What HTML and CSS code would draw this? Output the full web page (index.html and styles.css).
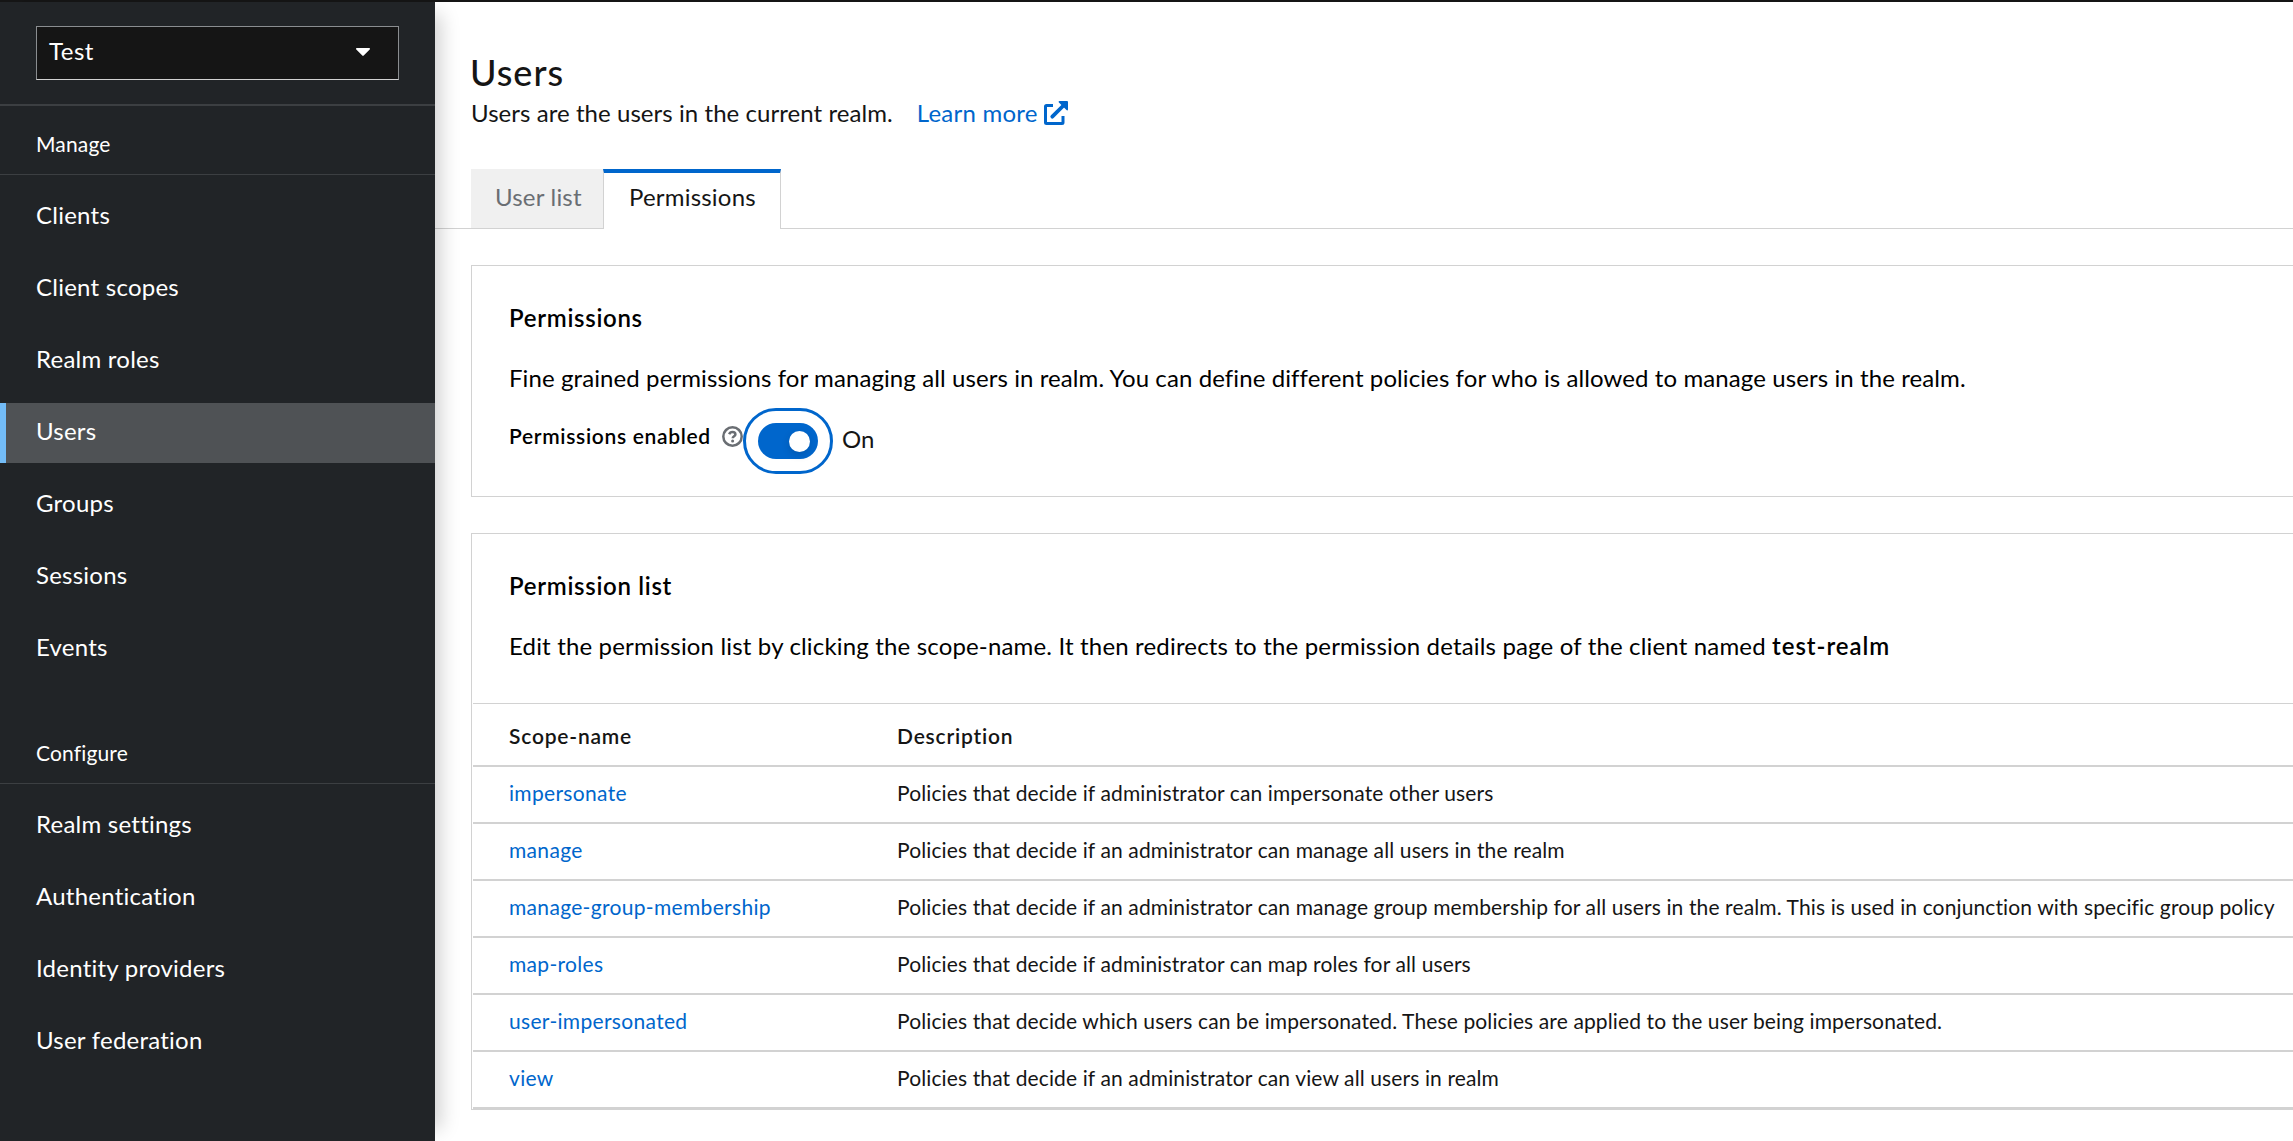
FILE: index.html
```html
<!DOCTYPE html>
<html lang="en">
<head>
<meta charset="utf-8">
<title>Users</title>
<link rel="stylesheet" href="styles.css">
</head>
<body>
<header class="masthead"></header>
<div class="page">
  <aside class="sidebar">
    <div class="realm">
      <button class="realm-select"><span>Test</span><svg class="caret" viewBox="0 0 14 8"><path d="M1 0h12c.9 0 1.300 1 .7 1.600L7.700 7.600a1 1 0 0 1-1.400 0L.3 1.600C-.3 1 .1 0 1 0z"/></svg></button>
    </div>
    <nav>
      <section class="nav-section">
        <h2 class="nav-title">Manage</h2>
        <ul class="nav-list">
          <li class="nav-item">Clients</li>
          <li class="nav-item">Client scopes</li>
          <li class="nav-item">Realm roles</li>
          <li class="nav-item current">Users</li>
          <li class="nav-item">Groups</li>
          <li class="nav-item">Sessions</li>
          <li class="nav-item">Events</li>
        </ul>
      </section>
      <section class="nav-section">
        <h2 class="nav-title">Configure</h2>
        <ul class="nav-list">
          <li class="nav-item">Realm settings</li>
          <li class="nav-item">Authentication</li>
          <li class="nav-item">Identity providers</li>
          <li class="nav-item">User federation</li>
        </ul>
      </section>
    </nav>
  </aside>
  <main class="main">
    <h1 class="title">Users</h1>
    <div class="subtitle">
      <span>Users are the users in the current realm.</span>
      <a class="learn">Learn more <svg class="external" viewBox="0 0 24 24"><path d="M9 4.500H2.500a1 1 0 0 0-1 1V21.500a1 1 0 0 0 1 1H18a1 1 0 0 0 1-1V15" fill="none" stroke="currentColor" stroke-width="3"/><path d="M8.300 15.700L20 4" stroke="currentColor" stroke-width="3.800" stroke-linecap="round"/><path d="M15.500 0H23a1 1 0 0 1 1 1v7.500c0 .8-.9 1.200-1.500.6L14.900 1.500C14.300.9 14.700 0 15.500 0z"/></svg></a>
    </div>
    <div class="tabs">
      <div class="tab">User list</div>
      <div class="tab active">Permissions</div>
    </div>
    <section class="card">
      <div class="card-head">
        <h3 class="card-title">Permissions</h3>
        <p class="text fine">Fine grained permissions for managing all users in realm. You can define different policies for who is allowed to manage users in the realm.</p>
      </div>
      <div class="field">
        <span class="label">Permissions enabled</span>
        <svg class="help" viewBox="0 0 21 21"><circle cx="10.500" cy="10.500" r="9.200" fill="none" stroke="currentColor" stroke-width="2.500"/><path d="M7.200 8.300C7.800 6.700 9.100 6.100 10.500 6.100c1.600 0 2.900.9 2.900 2.300 0 1.900-2.700 1.900-2.700 3.900" fill="none" stroke="currentColor" stroke-width="2.500"/><circle cx="10.600" cy="15" r="1.500"/></svg>
        <span class="focus-ring"><span class="switch"><span class="knob"></span></span></span>
        <span class="state">On</span>
      </div>
    </section>
    <section class="card">
      <div class="card-head">
        <h3 class="card-title">Permission list</h3>
        <p class="text edit">Edit the permission list by clicking the scope-name. It then redirects to the permission details page of the client named <strong>test-realm</strong></p>
      </div>
      <div class="table">
        <div class="row head"><span>Scope-name</span><span>Description</span></div>
        <div class="row"><a>impersonate</a><span>Policies that decide if administrator can impersonate other users</span></div>
        <div class="row"><a>manage</a><span>Policies that decide if an administrator can manage all users in the realm</span></div>
        <div class="row"><a>manage-group-membership</a><span>Policies that decide if an administrator can manage group membership for all users in the realm. This is used in conjunction with specific group policy</span></div>
        <div class="row"><a>map-roles</a><span>Policies that decide if administrator can map roles for all users</span></div>
        <div class="row"><a>user-impersonated</a><span>Policies that decide which users can be impersonated. These policies are applied to the user being impersonated.</span></div>
        <div class="row"><a>view</a><span>Policies that decide if an administrator can view all users in realm</span></div>
      </div>
    </section>
  </main>
</div>
</body>
</html>
```
FILE: styles.css
```css
* { box-sizing: border-box; margin: 0; padding: 0; }
body {
  height: 1141px;
  overflow: hidden;
  background: #fff;
  color: #151515;
  font: 400 24px/36px Lato, "Open Sans", sans-serif;
  letter-spacing: .1px;
}
ul { list-style: none; }
a { color: #06c; }

.masthead { height: 2px; background: #151515; }
.page { display: flex; height: 1139px; }

.sidebar {
  position: relative;
  z-index: 1;
  flex: none;
  width: 435px;
  background: #212427;
  color: #fff;
  box-shadow: 18px 0 18px -12px rgba(3, 3, 3, .18);
}
.realm { height: 104px; padding: 24px 36px 0; border-bottom: 2px solid #3c3f42; }
.realm-select {
  display: flex;
  justify-content: space-between;
  width: 363px;
  height: 54px;
  padding: 6px 28px 10px 12px;
  border: 1px solid #8a8d90;
  border-bottom-color: #d2d2d2;
  background: #151515;
  color: inherit;
  font: inherit;
  letter-spacing: .5px;
}
.caret { width: 14px; height: 8px; margin-top: 15px; fill: #fff; }
.nav-section + .nav-section { margin-top: 36px; }
.nav-title {
  padding: 22px 36px 14px;
  border-bottom: 1px solid #3c3f42;
  font-size: 21px;
  font-weight: 400;
  line-height: 32px;
  letter-spacing: .15px;
}
.nav-list { display: grid; gap: 12px; padding-top: 12px; }
.nav-item { height: 60px; padding: 10px 36px 14px; letter-spacing: .24px; }
.nav-item.current { padding-left: 30px; border-left: 6px solid #73bcf7; background: #4f5255; }

.main { flex: 1; min-width: 0; padding-top: 46px; white-space: nowrap; }
.title { padding: 1px 0 0 35px; font-size: 36px; font-weight: 500; line-height: 46px; letter-spacing: 1px; }
.subtitle { display: flex; gap: 24px; padding-left: 36px; letter-spacing: .06px; }
.learn { display: flex; gap: 6px; letter-spacing: .24px; }
.external { width: 24px; height: 24px; margin-top: 6px; fill: currentColor; }

.tabs {
  display: flex;
  height: 60px;
  margin-top: 38px;
  padding-left: 36px;
  box-shadow: inset 0 -1px #d2d2d2;
}
.tab { width: 132px; height: 59px; padding: 10px 0 0 24px; background: #f0f0f0; color: #6a6e73; letter-spacing: .2px; }
.tab.active {
  width: 178px;
  height: 60px;
  padding-top: 6px;
  padding-left: 25px;
  border: 1px solid #d2d2d2;
  border-top: 4px solid #06c;
  border-bottom: 0;
  background: #fff;
  color: #151515;
}

.card { margin: 36px 0 0 36px; border: 1px solid #d2d2d2; border-right: 0; }
.card-head { padding: 34px 0 0 37px; }
.card-title { margin-bottom: 24px; color: #000; font-size: 24px; font-weight: 600; letter-spacing: .7px; }
.text { color: #000; }
.fine { letter-spacing: .095px; }
.edit { letter-spacing: .165px; }
.edit strong { font-weight: 600; letter-spacing: .95px; }

.field { display: flex; align-items: flex-start; height: 100px; padding: 12px 0 0 37px; }
.label { width: 213px; margin-top: 12px; color: #000; font-size: 21px; font-weight: 600; line-height: 32px; letter-spacing: .68px; }
.help { width: 21px; height: 21px; margin-top: 18px; color: #6a6e73; fill: currentColor; }
.focus-ring {
  display: grid;
  place-items: center;
  width: 90px;
  height: 66px;
  border: 3px solid #06c;
  border-radius: 33px;
}
.switch { display: flex; justify-content: flex-end; width: 60px; height: 36px; padding: 8px 8px 0 0; border-radius: 18px; background: #06c; }
.knob { width: 21px; height: 21px; border-radius: 50%; background: #fff; box-shadow: 0 3px 8px rgba(3, 3, 3, .14); }
.state { margin: 13px 0 0 9px; }

.table { margin: 39px 0 0 1px; font-size: 21px; line-height: 32px; }
.row {
  display: grid;
  grid-template-columns: 388px 1fr;
  height: 57px;
  padding: 10px 0 0 36px;
  border-bottom: 2px solid #d2d2d2;
  letter-spacing: .12px;
}
.row a { letter-spacing: .32px; }
.head { height: 64px; padding-top: 16px; border-top: 1px solid #d2d2d2; font-weight: 600; letter-spacing: .8px; }
```
